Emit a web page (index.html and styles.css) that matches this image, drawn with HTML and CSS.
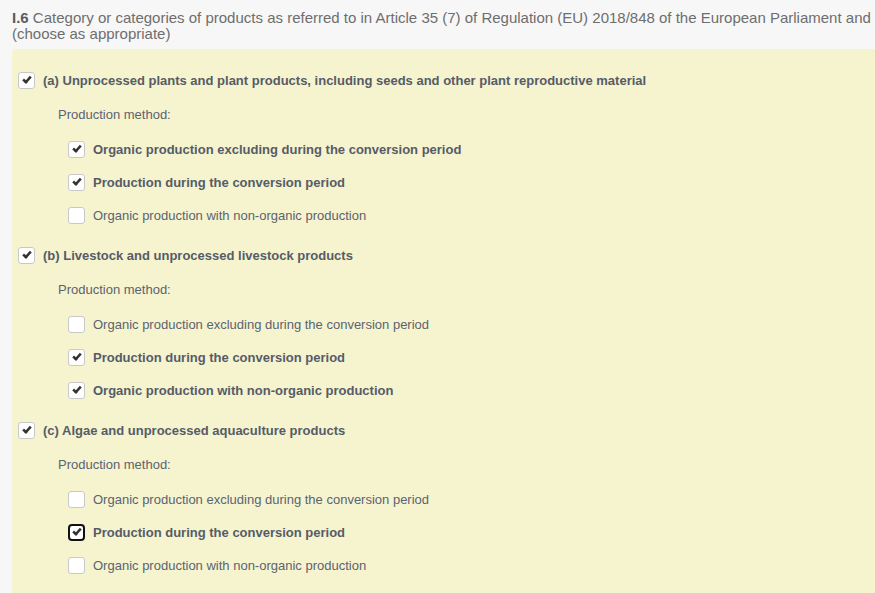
FILE: index.html
```html
<!DOCTYPE html>
<html>
<head>
<meta charset="utf-8">
<link rel="stylesheet" href="styles.css">
</head>
<body>
<div class="page">
  <div class="heading"><b>I.6</b> Category or categories of products as referred to in Article 35 (7) of Regulation (EU) 2018/848 of the European Parliament and<br>(choose as appropriate)</div>
  <div class="panel">
    <div class="category">
      <label class="row cat-row"><span class="box checked"></span><span class="label-text strong">(a) Unprocessed plants and plant products, including seeds and other plant reproductive material</span></label>
      <div class="method">Production method:</div>
      <div class="options">
        <label class="row opt"><span class="box checked"></span><span class="label-text strong">Organic production excluding during the conversion period</span></label>
        <label class="row opt"><span class="box checked"></span><span class="label-text strong">Production during the conversion period</span></label>
        <label class="row opt"><span class="box"></span><span class="label-text">Organic production with non-organic production</span></label>
      </div>
    </div>
    <div class="category">
      <label class="row cat-row"><span class="box checked"></span><span class="label-text strong">(b) Livestock and unprocessed livestock products</span></label>
      <div class="method">Production method:</div>
      <div class="options">
        <label class="row opt"><span class="box"></span><span class="label-text">Organic production excluding during the conversion period</span></label>
        <label class="row opt"><span class="box checked"></span><span class="label-text strong">Production during the conversion period</span></label>
        <label class="row opt"><span class="box checked"></span><span class="label-text strong">Organic production with non-organic production</span></label>
      </div>
    </div>
    <div class="category">
      <label class="row cat-row"><span class="box checked"></span><span class="label-text strong">(c) Algae and unprocessed aquaculture products</span></label>
      <div class="method">Production method:</div>
      <div class="options">
        <label class="row opt"><span class="box"></span><span class="label-text">Organic production excluding during the conversion period</span></label>
        <label class="row opt"><span class="box checked focused"></span><span class="label-text strong">Production during the conversion period</span></label>
        <label class="row opt"><span class="box"></span><span class="label-text">Organic production with non-organic production</span></label>
      </div>
    </div>
  </div>
</div>
</body>
</html>
```
FILE: styles.css
```css
html, body {
  margin: 0;
  padding: 0;
  background: #f7f7f7;
  overflow: hidden;
}
body {
  font-family: "Liberation Sans", Arial, sans-serif;
  width: 875px;
  height: 593px;
}
.page {
  padding: 10px 0 0 12px;
}
.heading {
  font-size: 15px;
  line-height: 16px;
  color: #6e6e6e;
  height: 39px;
  white-space: nowrap;
}
.heading b {
  color: #5c5c5c;
}
.panel {
  background: #f6f3cf;
  border-radius: 4px 0 0 0;
  padding: 20px 0 40px 6px;
}
.category + .category {
  margin-top: 12px;
}
.row {
  display: flex;
  align-items: center;
}
.cat-row {
  height: 22px;
}
.method {
  margin-top: 13px;
  height: 22px;
  line-height: 22px;
  padding-left: 40px;
  font-size: 13px;
  color: #5b6370;
}
.options {
  margin-top: 7px;
  padding-left: 50px;
}
.opt {
  height: 33px;
}
.box {
  box-sizing: border-box;
  width: 17px;
  height: 17px;
  flex: none;
  background: #fff;
  border: 1px solid #c9c9c9;
  border-radius: 3px;
  position: relative;
  margin-right: 8px;
}
.box.checked::after {
  content: "";
  position: absolute;
  left: 3px;
  top: 3px;
  width: 7px;
  height: 3px;
  border-left: 3px solid #333;
  border-bottom: 3px solid #333;
  transform: rotate(-48deg) scale(0.85);
  transform-origin: center;
}
.box.focused {
  border: 2px solid #111;
  border-radius: 4px;
}
.box.focused::after {
  left: 2px;
  top: 2px;
}
.label-text {
  font-size: 13px;
  color: #5b6370;
  white-space: nowrap;
}
.label-text.strong {
  font-weight: bold;
  color: #555c68;
}
```
